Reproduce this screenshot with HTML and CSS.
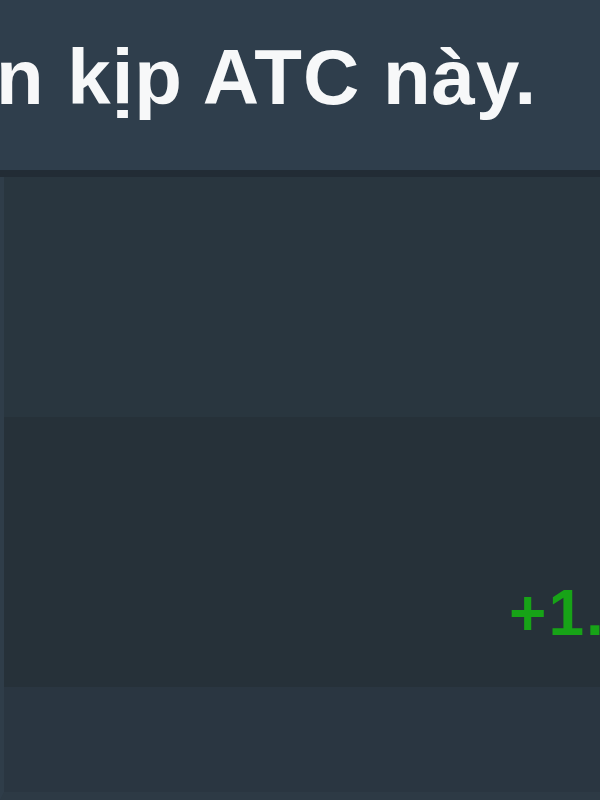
FILE: index.html
```html
<!DOCTYPE html>
<html lang="vi">
<head>
    <meta charset="UTF-8">
    <meta name="viewport" content="width=device-width, initial-scale=1.0">
    <title>ATC</title>
    <link rel="stylesheet" href="styles.css">
</head>
<body>
    <div class="notice">
        <p class="notice-text">n kịp ATC này.</p>
    </div>

    <div class="board">
        <div class="row row-first"></div>
        <div class="row row-second">
            <span class="change up">+1.</span>
        </div>
        <div class="row row-third"></div>
    </div>
</body>
</html>
```

FILE: styles.css
```css
body {
    margin: 0;
    width: 600px;
    height: 800px;
    overflow: hidden;
    background-color: #2a3641;
    font-family: "Liberation Sans", Arial, sans-serif;
}
.notice {
    height: 170px;
    background-color: #2f3e4c; /* header strip */
    overflow: hidden;
}
.notice-text {
    margin: 0;
    padding-top: 32px;
    margin-left: -4px;
    font-size: 78px;
    font-weight: bold;
    letter-spacing: 1px;
    color: #f7f8f9;
    white-space: nowrap;
}
.board {
    border-top: 7px solid #222c35;
}
.row {
    border-left: 4px solid #2f3d49;
    position: relative;
    overflow: hidden;
}
.row-first {
    height: 240px;
    background-color: #29363f;
}
.row-second {
    height: 270px;
    background-color: #263139;
}
.row-third {
    height: 105px;
    background-color: #2a3641;
    border-bottom: 8px solid #2d3a45;
}
.change {
    position: absolute;
    left: 505px;
    top: 159px;
    font-size: 64px;
    font-weight: bold;
    letter-spacing: 2px;
    white-space: nowrap;
}
.up {
    color: #17a317; /* gain */
}
```
